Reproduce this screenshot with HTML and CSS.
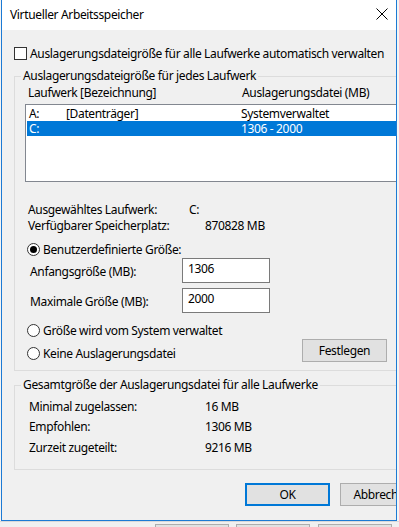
FILE: index.html
```html
<!doctype html>
<html lang="de">
<head>
  <meta charset="utf-8">
  <title>Virtueller Arbeitsspeicher</title>
  <link rel="stylesheet" href="styles.css">
</head>
<body>

<div class="window">
  <div class="titlebar">
    <span class="title">Virtueller Arbeitsspeicher</span>
    <svg class="close" width="12" height="12" viewBox="0 0 12 12">
      <path d="M0.5 0.5 L11.5 11.5 M11.5 0.5 L0.5 11.5" stroke="#000" stroke-width="1" fill="none"/>
    </svg>
  </div>

  <div class="content">
    <label class="check-row"><span class="checkbox"></span>Auslagerungsdateigröße für alle Laufwerke automatisch verwalten</label>

    <fieldset class="group group-drives">
      <legend>Auslagerungsdateigröße für jedes Laufwerk</legend>

      <div class="list-head">
        <span class="head-drive">Laufwerk [Bezeichnung]</span>
        <span class="head-size">Auslagerungsdatei (MB)</span>
      </div>

      <div class="listbox">
        <div class="list-row">
          <span class="col-letter">A:</span>
          <span class="col-label">[Datenträger]</span>
          <span class="col-size">Systemverwaltet</span>
        </div>
        <div class="list-row selected">
          <span class="col-letter">C:</span>
          <span class="col-label"></span>
          <span class="col-size">1306 - 2000</span>
        </div>
      </div>

      <div class="info-row first">
        <span class="info-label">Ausgewähltes Laufwerk:</span>
        <span class="info-drive">C:</span>
      </div>
      <div class="info-row">
        <span class="info-label">Verfügbarer Speicherplatz:</span>
        <span class="info-space">870828 MB</span>
      </div>

      <label class="radio-row custom"><span class="radio checked"></span>Benutzerdefinierte Größe:</label>

      <div class="field-row initial">
        <span class="field-label">Anfangsgröße (MB):</span>
        <span class="textbox">1306</span>
      </div>
      <div class="field-row maximum">
        <span class="field-label">Maximale Größe (MB):</span>
        <span class="textbox">2000</span>
      </div>

      <label class="radio-row system"><span class="radio"></span>Größe wird vom System verwaltet</label>

      <div class="last-row">
        <label class="radio-row none"><span class="radio"></span>Keine Auslagerungsdatei</label>
        <button class="btn set">Festlegen</button>
      </div>
    </fieldset>

    <fieldset class="group group-total">
      <legend>Gesamtgröße der Auslagerungsdatei für alle Laufwerke</legend>
      <div class="total-row r1">
        <span class="total-label">Minimal zugelassen:</span>
        <span>16 MB</span>
      </div>
      <div class="total-row r2">
        <span class="total-label">Empfohlen:</span>
        <span>1306 MB</span>
      </div>
      <div class="total-row r3">
        <span class="total-label">Zurzeit zugeteilt:</span>
        <span>9216 MB</span>
      </div>
    </fieldset>

    <div class="footer">
      <button class="btn default">OK</button>
      <button class="btn">Abbrechen</button>
    </div>
  </div>
</div>

<div class="desktop">
  <span class="under-btn b1"></span>
  <span class="under-btn b2"></span>
  <span class="under-btn b3"></span>
</div>

</body>
</html>
```

FILE: styles.css
```css
body {
  margin: 0;
  width: 399px;
  height: 527px;
  overflow: hidden;
  background: #f4f4f4;
  font-family: "Noto Sans", sans-serif;
  font-size: 12px;
  letter-spacing: -0.35px;
  color: #000;
}

.window {
  box-sizing: border-box;
  width: 396px;
  height: 521px;
  margin-left: 1px;
  border: 1px solid #1c7ad4;
  border-top: none;
  background: #f0f0f0;
  overflow: hidden;
}

.titlebar {
  height: 30px;
  background: #fff;
  display: flex;
  align-items: center;
  justify-content: space-between;
  padding: 0 8px 0 8px;
}

.title {
  font-size: 12px;
  margin-top: -2px;
}

.close {
  margin-top: -2px;
}

.content {
  width: 460px;
  padding-left: 12px;
}

.check-row {
  display: flex;
  align-items: center;
  height: 16px;
  margin-top: 15px;
}

.checkbox {
  box-sizing: border-box;
  width: 13px;
  height: 13px;
  border: 1px solid #333;
  background: #fff;
  margin-right: 3px;
}

.group {
  border: 1px solid #dcdcdc;
  margin: 0;
  padding: 0;
  min-width: 0;
}

.group legend {
  padding: 0 2px;
  margin-left: 6px;
  line-height: 16px;
}

.group-drives {
  margin-top: 7px;
  padding-bottom: 8px;
}

.list-head {
  display: flex;
  height: 16px;
  line-height: 16px;
  margin-top: 1px;
  padding-left: 13px;
}

.head-drive {
  width: 214px;
}

.listbox {
  box-sizing: border-box;
  height: 78px;
  margin-top: 3px;
  margin-left: 10px;
  border: 1px solid #828790;
  background: #fff;
  padding: 1px;
}

.list-row {
  display: flex;
  height: 15px;
  line-height: 15px;
  padding-left: 2px;
}

.list-row.selected {
  background: #0078d7;
  color: #fff;
}

.col-letter {
  width: 37px;
}

.col-label {
  width: 175px;
}

.info-row {
  display: flex;
  height: 16px;
  line-height: 16px;
  padding-left: 13px;
}

.info-row.first {
  margin-top: 20px;
}

.info-label {
  width: 161px;
}

.info-space {
  margin-left: 16px;
}

.radio-row {
  display: flex;
  align-items: center;
  height: 16px;
  padding-left: 12px;
}

.radio {
  box-sizing: border-box;
  width: 13px;
  height: 13px;
  border: 1px solid #333;
  border-radius: 50%;
  background: #fff;
  margin-right: 3px;
  display: flex;
  align-items: center;
  justify-content: center;
}

.radio.checked::after {
  content: "";
  width: 7px;
  height: 7px;
  border-radius: 50%;
  background: #000;
}

.radio-row.custom {
  margin-top: 7px;
}

.field-row {
  display: flex;
  align-items: center;
  height: 25px;
  padding-left: 15px;
}

.field-row.initial {
  margin-top: 1px;
}

.field-row.maximum {
  margin-top: 5px;
}

.field-label {
  width: 152px;
  padding-top: 2px;
}

.textbox {
  box-sizing: border-box;
  width: 88px;
  height: 25px;
  border: 1px solid #7a7a7a;
  background: #fff;
  padding: 2px 0 0 5px;
  line-height: 16px;
}

.radio-row.system {
  margin-top: 9px;
}

.last-row {
  display: flex;
  align-items: flex-start;
  margin-top: 1px;
}

.radio-row.none {
  margin-top: 6px;
  width: 275px;
}

.btn {
  box-sizing: border-box;
  width: 85px;
  height: 23px;
  border: 1px solid #adadad;
  background: #e1e1e1;
  font-family: inherit;
  font-size: 12px;
  letter-spacing: inherit;
  color: #000;
  padding: 0;
  margin: 0;
}

.group-total {
  margin-top: 6px;
  padding-bottom: 13px;
}

.total-row {
  display: flex;
  height: 16px;
  line-height: 16px;
  padding-left: 14px;
}

.total-row.r1 {
  margin-top: 6px;
}

.total-row.r2 {
  margin-top: 4px;
}

.total-row.r3 {
  margin-top: 5px;
}

.total-label {
  width: 176px;
}

.footer {
  display: flex;
  gap: 10px;
  margin-top: 13px;
  padding-left: 231px;
}

.btn.default {
  border: 2px solid #0078d7;
}

.desktop {
  position: relative;
  height: 6px;
  background: #f0f0f0;
  border-top: 1px solid #d8d8d8;
}

.under-btn {
  position: absolute;
  top: 2px;
  height: 10px;
  border: 1px solid #adadad;
  background: #e1e1e1;
}

.b1 { left: 155px; width: 72px; }
.b2 { left: 236px; width: 72px; }
.b3 { left: 318px; width: 72px; }
```
